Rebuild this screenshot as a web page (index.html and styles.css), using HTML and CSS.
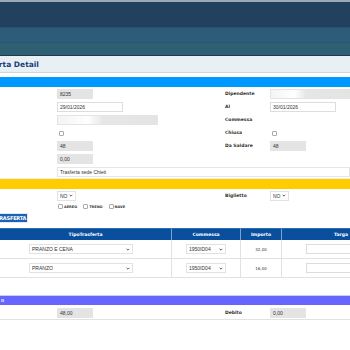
FILE: index.html
```html
<!DOCTYPE html>
<html lang="it">
<head>
  <meta charset="UTF-8" />
  <title>Trasferta Detail</title>
  <link rel="stylesheet" href="styles.css">
</head>
<body>
  <div class="topbar"></div>
  <div class="nav nav-one"></div>
  <div class="nav nav-two"></div>
  <div class="titlebar"><h1>Trasferta Detail</h1></div>

  <div class="band blue"></div>
  <div class="form">
    <div></div><div><span class="field ro short">8235</span></div>
    <div class="lbl">Dipendente</div><div><span class="field ro blur wide-r"></span></div>

    <div></div><div><span class="field date">29/01/2026</span></div>
    <div class="lbl">Al</div><div><span class="field date">30/01/2026</span></div>

    <div></div><div><span class="field ro blur long"></span></div>
    <div class="lbl">Commessa</div><div></div>

    <div></div><div><span class="check"></span></div>
    <div class="lbl">Chiusa</div><div><span class="check"></span></div>

    <div></div><div><span class="field ro short">48</span></div>
    <div class="lbl">Da Saldare</div><div><span class="field ro short">48</span></div>

    <div></div><div><span class="field ro short">0,00</span></div>
    <div></div><div></div>

    <div></div><div class="span3"><span class="field full">Trasferta sede Chieti</span></div>
  </div>

  <div class="band yellow"></div>
  <div class="form">
    <div></div><div><span class="select tiny">NO <svg viewBox="0 0 6 4"><path d="M1 1l2 2 2-2" /></svg></span></div>
    <div class="lbl">Biglietto</div><div><span class="select tiny">NO <svg viewBox="0 0 6 4"><path d="M1 1l2 2 2-2" /></svg></span></div>

    <div></div>
    <div class="span3 travel">
      <label><span class="check"></span>AEREO</label>
      <label><span class="check"></span>TRENO</label>
      <label><span class="check"></span>NAVE</label>
    </div>
  </div>

  <div class="actions"><button>TRASFERTA</button></div>

  <div class="grid">
    <div class="th">TipoTrasferta</div>
    <div class="th">Commessa</div>
    <div class="th">Importo</div>
    <div class="th targa">Targa</div>

    <div class="td"><span class="select meal">PRANZO E CENA <svg viewBox="0 0 6 4"><path d="M1 1l2 2 2-2" /></svg></span></div>
    <div class="td"><span class="select code">1950ID04 <svg viewBox="0 0 6 4"><path d="M1 1l2 2 2-2" /></svg></span></div>
    <div class="td num">32,00</div>
    <div class="td"><span class="field plate"></span></div>

    <div class="td"><span class="select meal">PRANZO <svg viewBox="0 0 6 4"><path d="M1 1l2 2 2-2" /></svg></span></div>
    <div class="td"><span class="select code">1950ID04 <svg viewBox="0 0 6 4"><path d="M1 1l2 2 2-2" /></svg></span></div>
    <div class="td num">16,00</div>
    <div class="td"><span class="field plate"></span></div>
  </div>

  <div class="band lavender"><span class="mark">II</span></div>
  <div class="form totals">
    <div></div><div><span class="field ro short">48,00</span></div>
    <div class="lbl">Debito</div><div><span class="field ro short">0,00</span></div>
  </div>
</body>
</html>
```

FILE: styles.css
```css
body {
  margin: 0;
  font-family: "DejaVu Sans", Verdana, sans-serif;
  font-size: 5px;
  color: #222;
  background: #fff;
  overflow: hidden;
}
.topbar {
  height: 25px;
  background: #22415f;
  border-top: 2px solid #9aaab6;
}
.nav {
  height: 14px;
}
.nav-one {
  background: #2d5b7a;
  border-top: 1px solid #2a4f6c;
}
.nav-two {
  height: 12px;
  background: #2f5f73;
  border-top: 1px solid #2b5668;
  border-bottom: 1px solid #1d3d4c;
}
.titlebar {
  height: 16px;
  background: #e8f0f4;
  border-bottom: 1px solid #ccd6dc;
  display: flex;
  align-items: center;
  overflow: hidden;
}
.titlebar h1 {
  margin: 0 0 0 -27px;
  font-size: 7.5px;
  font-weight: bold;
  color: #1b3f7a;
  white-space: nowrap;
}
.band {
  height: 10px;
}
.blue {
  margin-top: 4px;
  background: #0099ff;
}
.yellow {
  margin-top: 0;
  background: #ffcc00;
  border-top: 1px solid #eee;
}
.lavender {
  margin-top: 17px;
  height: 9px;
  background: #6666ff;
  border-top: 1px solid #ccccee;
  display: flex;
  align-items: center;
}
.mark {
  margin-left: 1px;
  color: #fff;
  font-size: 4px;
  font-weight: bold;
}
.form {
  display: grid;
  grid-template-columns: 57px 163px 50px minmax(0, 1fr);
  grid-auto-rows: 13px;
  align-items: center;
}
.form:first-of-type {
  padding-top: 2px;
}
.span3 {
  grid-column: 2 / 5;
}
.lbl {
  padding-left: 5px;
  font-size: 4.5px;
  font-weight: bold;
  color: #333;
}
.field {
  display: block;
  box-sizing: border-box;
  height: 10px;
  line-height: 9px;
  padding: 0 2px;
  font-family: "Liberation Sans", Arial, sans-serif;
  font-size: 5px;
  color: #333;
  border: 1px solid #ddd;
  background: #fff;
}
.ro {
  background: #e4e4e4;
  border-color: #e4e4e4;
}
.short {
  width: 36px;
}
.date {
  width: 66px;
}
.long {
  width: 101px;
}
.wide-r {
  width: 80px;
}
.full {
  width: 100%;
  border-color: #e6e6e6;
}
.blur {
  background: linear-gradient(90deg, #f4f4f4 0%, #fff 30%, #e6e6e6 45%, #e4e4e4 100%);
}
.check {
  display: inline-block;
  box-sizing: border-box;
  width: 5px;
  height: 5px;
  margin-left: 2px;
  border: 1px solid #aaa;
  border-radius: 1px;
  background: #fff;
  vertical-align: middle;
}
.select {
  display: inline-flex;
  align-items: center;
  justify-content: space-between;
  box-sizing: border-box;
  height: 10px;
  padding: 0 2px;
  font-family: "Liberation Sans", Arial, sans-serif;
  font-size: 5px;
  color: #333;
  border: 1px solid #e2e2e2;
  background: #fff;
}
.select svg {
  width: 4px;
  height: 3px;
  fill: none;
  stroke: #333;
  stroke-width: 1.2;
}
.tiny {
  width: 19px;
}
.travel {
  display: flex;
  gap: 5px;
  align-items: center;
  height: 10px;
  margin-top: -4px;
}
.travel label {
  display: flex;
  align-items: center;
  gap: 1px;
  font-size: 3.5px;
  font-weight: bold;
  color: #333;
}
.travel .check {
  margin-left: 1px;
}
.actions {
  margin-top: -2px;
  overflow: hidden;
}
.actions button {
  margin-left: -6px;
  height: 10px;
  padding: 0 1px;
  border: 1px solid #e0e8f4;
  background: #1a62b8;
  color: #fff;
  font-family: "DejaVu Sans", Verdana, sans-serif;
  font-size: 5px;
  font-weight: bold;
  letter-spacing: -0.2px;
}
.grid {
  display: grid;
  grid-template-columns: 172px 69px 41px minmax(0, 1fr);
  margin-top: 5px;
}
.th {
  height: 11px;
  line-height: 11px;
  background: #0a4f9e;
  border-right: 1px solid #7fa2cc;
  color: #fff;
  font-size: 4.5px;
  font-weight: bold;
  text-align: center;
  border-top: 1px solid #2b6cb4;
}
.th.targa {
  border-right: 0;
  text-align: right;
  padding-right: 2px;
}
.td {
  height: 18px;
  display: flex;
  align-items: center;
  overflow: hidden;
  border-bottom: 1px solid #e2e2e2;
  border-right: 1px solid #e2e2e2;
}
.td:nth-child(4n) {
  border-right: 0;
}
.meal {
  width: 104px;
  margin-left: 29px;
}
.code {
  width: 40px;
  margin-left: 14px;
}
.num {
  justify-content: center;
  font-size: 4px;
  color: #333;
}
.plate {
  flex: none;
  width: 60px;
  margin-left: 24px;
  border-color: #ddd;
}
.totals {
  padding-top: 1px;
  border-bottom: 1px solid #e2e2e2;
}
```
